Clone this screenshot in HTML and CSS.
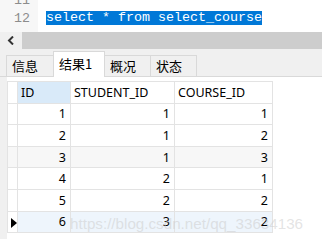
FILE: index.html
```html
<!DOCTYPE html>
<html>
<head>
<meta charset="utf-8">
<link rel="stylesheet" href="styles.css">
</head>
<body>
<div class="editor">
  <div class="gutter">
    <div class="ln">11</div>
    <div class="ln">12</div>
  </div>
  <div class="code">
    <div class="line"></div>
    <div class="line"><span class="sel">select * from select_course</span></div>
  </div>
</div>
<div class="hscroll">
  <div class="arrow"><svg width="8" height="9" viewBox="0 0 8 9"><path d="M6 0.5 L2 4.5 L6 8.5" fill="none" stroke="#333" stroke-width="2"/></svg></div>
  <div class="thumb"></div>
</div>
<div class="tabbar">
  <div class="tab">信息</div>
  <div class="tab active">结果1</div>
  <div class="tab">概况</div>
  <div class="tab">状态</div>
</div>
<div class="panel">
  <table class="grid">
    <thead>
      <tr><th class="rh"></th><th class="c1 hl">ID</th><th class="c2">STUDENT_ID</th><th class="c3">COURSE_ID</th></tr>
    </thead>
    <tbody>
      <tr><td class="rh"></td><td>1</td><td>1</td><td>1</td></tr>
      <tr><td class="rh"></td><td>2</td><td>1</td><td>2</td></tr>
      <tr class="alt"><td class="rh"></td><td>3</td><td>1</td><td>3</td></tr>
      <tr><td class="rh"></td><td>4</td><td>2</td><td>1</td></tr>
      <tr><td class="rh"></td><td>5</td><td>2</td><td>2</td></tr>
      <tr class="cur"><td class="rh"><span class="tri"></span></td><td>6</td><td>3</td><td>2</td></tr>
    </tbody>
  </table>
  <div class="wm">https://blog.csdn.net/qq_33634136</div>
</div>
</body>
</html>
```
FILE: styles.css
```css
html, body { margin: 0; padding: 0; }
body {
  width: 322px; height: 239px; overflow: hidden; background: #fff;
  font-family: "Noto Sans", "Noto Sans CJK SC", sans-serif;
}
.editor { display: flex; height: 32px; overflow: hidden; background: #fff; }
.gutter { width: 38px; background: #f7f7f7; margin-top: -8px; }
.ln {
  height: 18px; line-height: 18px; font-family: "Liberation Mono", monospace;
  font-size: 13.33px; color: #8c8c8c; padding-left: 14px;
}
.code { flex: 1; margin-top: -8px; padding-left: 8px; }
.line { height: 18px; line-height: 18px; font-family: "Liberation Mono", monospace; font-size: 13.33px; }
.sel { background: #0078d7; color: #fff; display: inline-block; line-height: 14px; vertical-align: 1px; }
.hscroll { display: flex; height: 17px; background: #f0f0f0; }
.arrow { width: 22px; display: flex; align-items: center; justify-content: center; }
.thumb { flex: 1; background: #cdcdcd; }
.tabbar {
  display: flex; align-items: flex-end; background: #f0f0f0;
  padding-left: 6px; border-bottom: 1px solid #d9d9d9; box-sizing: border-box; height: 28px;
}
.tab {
  height: 21px; box-sizing: border-box; border: 1px solid #d9d9d9; border-bottom: none;
  background: #f0f0f0; font-size: 13px; line-height: 20px; padding: 0 5px;
  margin-right: -1px; color: #000; font-family: "Noto Sans CJK SC", sans-serif;
}
.tab:nth-child(1) { width: 48px; }
.tab:nth-child(2) { width: 52px; }
.tab:nth-child(3) { width: 47px; }
.tab:nth-child(4) { width: 47px; }
.tab.active { background: #fff; margin-bottom: -1px; height: 26px; line-height: 23px; position: relative; }
.panel { position: relative; height: 163px; background: #fff; border-left: 7px solid #f0f0f0; padding-top: 4px; }
.grid { border-collapse: collapse; font-size: 12.5px; table-layout: fixed; }
.grid th, .grid td { border: 1px solid #e3e3e3; height: 21.6px; padding: 0 4px; box-sizing: border-box; }
.grid th { text-align: left; font-weight: normal; padding-left: 3px; }
.grid td { text-align: right; }
.grid .rh { width: 10px; padding: 0; background: #fff; }
.grid .c1 { width: 53px; }
.grid .c2 { width: 104px; }
.grid .c3 { width: 98px; }
.grid .hl { background: #d9eaf9; }
.grid tr.alt td { background: #f7f7f7; }
.grid tr.cur td { background: #eef5fc; }
.grid tr.cur td.rh { background: #fff; }
.tri { display: inline-block; width: 0; height: 0; border-top: 5px solid transparent; border-bottom: 5px solid transparent; border-left: 6px solid #000; vertical-align: middle; margin-left: 1px; }
.wm {
  position: absolute; left: 63px; top: 138px; font-family: "Liberation Sans", sans-serif;
  font-size: 15.2px; color: rgba(205,205,205,0.55); white-space: nowrap;
}
```
